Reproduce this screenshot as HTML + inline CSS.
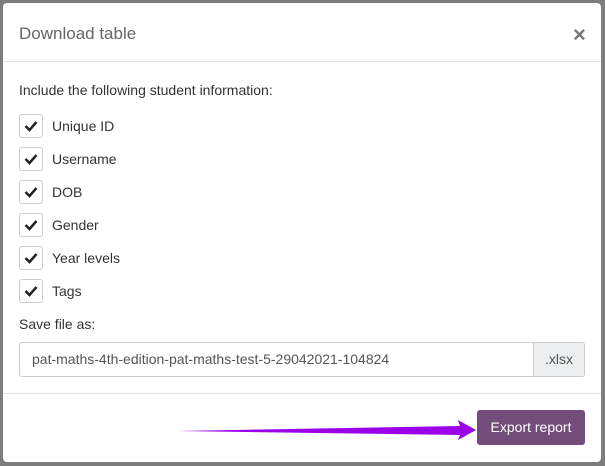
<!DOCTYPE html>
<html><head><style>
body{margin:0;width:605px;height:466px;background:#7d7d7d;font-family:"Liberation Sans",sans-serif;position:relative;overflow:hidden}
.m{position:absolute;left:3px;top:3px;width:598px;height:459px;background:#fff;border-radius:4px}
.t{position:absolute;left:16px;top:21px;font-size:17px;color:#666;font-weight:300}
.x{position:absolute;left:570px;top:19px;font-size:22px;color:#777;font-weight:bold}
.hr{position:absolute;left:0;width:598px;height:1px;background:#e3e3e3}
.l{position:absolute;left:16px;font-size:14px;color:#333}
.cb{position:absolute;left:16px;width:22px;height:22px;border:1px solid #ccc;border-radius:3px}
.cb svg{position:absolute;left:4px;top:5px}
.in{position:absolute;left:16px;top:339px;width:564px;height:33px;border:1px solid #ccc;border-radius:3px;overflow:hidden}
.in span{position:absolute;left:12px;top:8px;font-size:14px;color:#555}
.ad{position:absolute;right:0;top:0;width:50px;height:33px;background:#eceeef;border-left:1px solid #ccc;font-size:14px;color:#555;text-align:center;line-height:33px}
.b{position:absolute;left:474px;top:407px;width:108px;height:35px;background:#744c7b;border-radius:3px;color:#fff;font-size:14px;text-align:center;line-height:35px}
</style></head><body>
<div class="m">
<div class="t">Download table</div><div class="x">×</div>
<div class="hr" style="top:58px"></div>
<div class="l" style="top:79px">Include the following student information:</div>
<div class="cb" style="top:111px"><svg width="14" height="12"><path d="M1.5 6l4 4 7-8" stroke="#222" stroke-width="2.5" fill="none"/></svg></div><div class="l" style="left:49px;top:115px">Unique ID</div>
<div class="cb" style="top:144px"><svg width="14" height="12"><path d="M1.5 6l4 4 7-8" stroke="#222" stroke-width="2.5" fill="none"/></svg></div><div class="l" style="left:49px;top:148px">Username</div>
<div class="cb" style="top:177px"><svg width="14" height="12"><path d="M1.5 6l4 4 7-8" stroke="#222" stroke-width="2.5" fill="none"/></svg></div><div class="l" style="left:49px;top:181px">DOB</div>
<div class="cb" style="top:210px"><svg width="14" height="12"><path d="M1.5 6l4 4 7-8" stroke="#222" stroke-width="2.5" fill="none"/></svg></div><div class="l" style="left:49px;top:214px">Gender</div>
<div class="cb" style="top:243px"><svg width="14" height="12"><path d="M1.5 6l4 4 7-8" stroke="#222" stroke-width="2.5" fill="none"/></svg></div><div class="l" style="left:49px;top:247px">Year levels</div>
<div class="cb" style="top:276px"><svg width="14" height="12"><path d="M1.5 6l4 4 7-8" stroke="#222" stroke-width="2.5" fill="none"/></svg></div><div class="l" style="left:49px;top:280px">Tags</div>
<div class="l" style="top:313px">Save file as:</div>
<div class="in"><span>pat-maths-4th-edition-pat-maths-test-5-29042021-104824</span><div class="ad">.xlsx</div></div>
<div class="hr" style="top:390px"></div>
<div class="b">Export report</div>
</div>
<svg style="position:absolute;left:0;top:0" width="605" height="466"><polygon points="178,431 460,426 458,420 476,430 458,440 460,435" fill="#9b00e8"/></svg>
</body></html>
